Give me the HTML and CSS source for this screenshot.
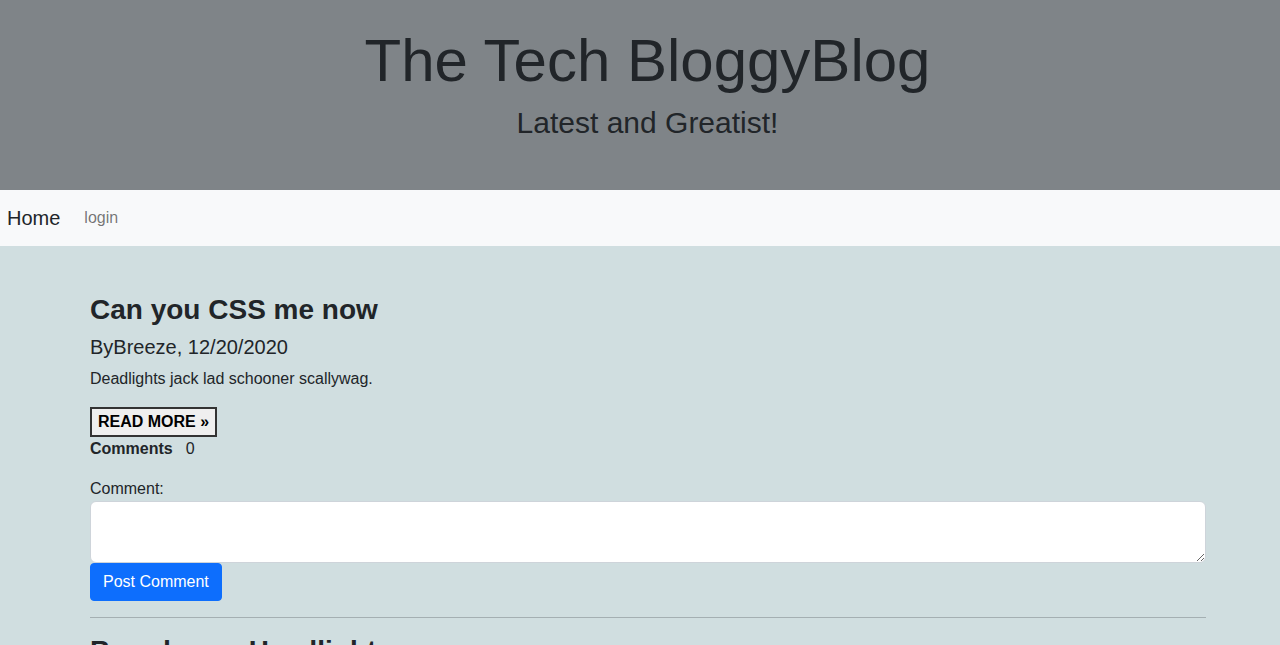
FILE: index.html
```html
<!DOCTYPE html>
<html lang="en">
<head>
<meta charset="utf-8">
<title>The Tech BloggyBlog</title>
<link rel="stylesheet" href="styles.css">
</head>
<body>
<header class="hero">
  <h1 class="hero-title">The Tech BloggyBlog</h1>
  <h3 class="hero-sub">Latest and Greatist!</h3>
</header>
<nav class="navbar">
  <a class="brand" href="#">Home</a>
  <a class="nav-link" href="#">login</a>
</nav>
<main class="content">
  <article class="post">
    <h3 class="post-title">Can you CSS me now</h3>
    <h5 class="post-meta">ByBreeze, 12/20/2020</h5>
    <p class="post-body">Deadlights jack lad schooner scallywag.</p>
    <button class="read-more" type="button">READ MORE &raquo;</button>
    <div class="comments-row"><span class="comments-label">Comments</span><span class="comments-count">0</span></div>
    <form class="comment-form">
      <label class="comment-label" for="c1">Comment:</label>
      <textarea class="comment-input" id="c1"></textarea>
      <button class="post-btn" type="button">Post Comment</button>
    </form>
  </article>
  <hr class="divider">
  <article class="post">
    <h3 class="post-title">Broad seas Headlights</h3>
  </article>
</main>
</body>
</html>
```
FILE: styles.css
```css
* { box-sizing: border-box; }
html, body { margin: 0; padding: 0; }
body {
  font-family: "Liberation Sans", Arial, sans-serif;
  color: #212529;
  background: #d0dee0;
  font-size: 16px;
  line-height: 1.5;
}
.hero {
  background: #7f8488;
  text-align: center;
  padding: 25px 0 49px 15px;
}
.hero-title {
  margin: 0 0 8px;
  font-size: 60px;
  font-weight: 400;
  line-height: 1.2;
}
.hero-sub {
  margin: 0;
  font-size: 30px;
  font-weight: 400;
  line-height: 1.2;
}
.navbar {
  background: #f8f9fa;
  height: 56px;
  display: flex;
  align-items: center;
  padding-left: 7px;
}
.brand {
  font-size: 20px;
  line-height: 30px;
  color: #212529;
  text-decoration: none;
  margin-right: 16px;
}
.nav-link {
  font-size: 16px;
  line-height: 24px;
  color: rgba(0,0,0,.55);
  text-decoration: none;
  padding: 0 8px;
}
.content {
  width: 1116px;
  margin-left: 90px;
  padding-top: 47px;
}
.post-title {
  margin: 0 0 8px;
  font-size: 28px;
  font-weight: 700;
  line-height: 1.2;
}
.post-meta {
  margin: 0 0 8px;
  font-size: 20px;
  font-weight: 400;
  line-height: 1.2;
}
.post-body {
  margin: 0 0 16px;
}
.read-more {
  display: block;
  font-family: "Liberation Sans", Arial, sans-serif;
  font-size: 16px;
  font-weight: 700;
  line-height: 18px;
  color: #000;
  background: #efefef;
  border: 2px solid #333;
  padding: 4px 6px;
  margin: 0;
}
.comments-row {
  font-size: 16px;
  line-height: 24px;
  margin-bottom: 16px;
}
.comments-label { font-weight: 700; }
.comments-count { margin-left: 13px; }
.comment-form { display: flex; flex-direction: column; align-items: flex-start; }
.comment-label { line-height: 24px; }
.comment-input {
  width: 100%;
  height: 62px;
  border: 1px solid #ced4da;
  border-radius: 6px;
  background: #fff;
  font-family: inherit;
  font-size: 16px;
  resize: vertical;
  display: block;
}
.post-btn {
  font-family: "Liberation Sans", Arial, sans-serif;
  font-size: 16px;
  line-height: 24px;
  color: #fff;
  background: #0d6efd;
  border: 1px solid #0d6efd;
  border-radius: 4px;
  padding: 6px 12px;
}
.divider {
  margin: 16px 0;
  border: 0;
  border-top: 1px solid #212529;
  opacity: .25;
}
```
